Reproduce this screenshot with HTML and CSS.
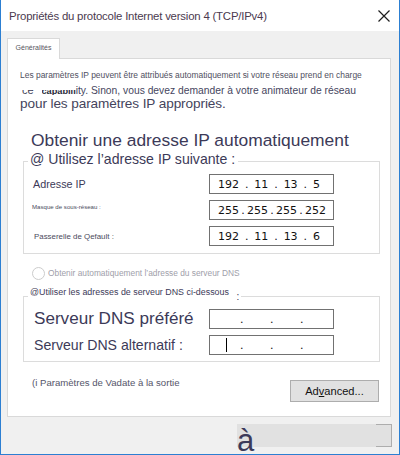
FILE: index.html
```html
<!DOCTYPE html>
<html lang="fr">
<head>
<meta charset="utf-8">
<title>Propriétés du protocole Internet version 4 (TCP/IPv4)</title>
<link rel="stylesheet" href="styles.css">
</head>
<body>
<div class="window">
  <div class="titlebar">
    <span class="title">Propriétés du protocole Internet version 4 (TCP/IPv4)</span>
    <svg class="close" width="12" height="12" viewBox="0 0 12 12"><path d="M0.5 0.5 L11.5 11.5 M11.5 0.5 L0.5 11.5" stroke="#1e1e1e" stroke-width="1.2" fill="none"/></svg>
  </div>
  <div class="body">
    <div class="tabs"><div class="tab">Généralités</div></div>
    <div class="panel">
      <p class="intro1">Les paramètres IP peuvent être attribués automatiquement si votre réseau prend en charge</p>
      <p class="intro2"><span class="clip clip-ce"><span class="clip-in">ce</span></span> <span class="clip clip-cap"><span class="clip-in">capabili</span></span>ity. Sinon, vous devez demander à votre animateur de réseau</p>
      <p class="intro3">pour les paramètres IP appropriés.</p>
      <p class="auto">Obtenir une adresse IP automatiquement</p>
      <fieldset class="group group-ip">
        <legend class="legend-ip">@ Utilisez l’adresse IP suivante :</legend>
        <div class="row">
          <span class="label l-ip">Adresse IP</span>
          <div class="ip"><span>192</span><span>.</span><span>11</span><span>.</span><span>13</span><span>.</span><span>5</span></div>
        </div>
        <div class="row">
          <span class="label l-mask">Masque de sous-réseau :</span>
          <div class="ip ip-wide"><span>255</span><span>.</span><span>255</span><span>.</span><span>255</span><span>.</span><span>252</span></div>
        </div>
        <div class="row">
          <span class="label l-gw">Passerelle de Qefault :</span>
          <div class="ip"><span>192</span><span>.</span><span>11</span><span>.</span><span>13</span><span>.</span><span>6</span></div>
        </div>
      </fieldset>
      <div class="radio-row"><span class="radio"></span><span class="radio-label">Obtenir automatiquement l’adresse du serveur DNS</span></div>
      <fieldset class="group group-dns">
        <legend class="legend-dns">@Utiliser les adresses de serveur DNS ci-dessous <span class="colon">:</span></legend>
        <div class="row row-dns">
          <span class="label l-dns1">Serveur DNS préféré</span>
          <div class="ip ip-empty"><span class="oct"></span><span class="dot">.</span><span class="oct"></span><span class="dot">.</span><span class="oct"></span><span class="dot">.</span><span class="oct"></span></div>
        </div>
        <div class="row row-dns">
          <span class="label l-dns2">Serveur DNS alternatif :</span>
          <div class="ip ip-empty"><span class="oct"><span class="caret"></span></span><span class="dot">.</span><span class="oct"></span><span class="dot">.</span><span class="oct"></span><span class="dot">.</span><span class="oct"></span></div>
        </div>
      </fieldset>
      <div class="footer">
        <span class="validate">(i Paramètres de Vadate à la sortie</span>
        <button class="adv" type="button">Ad<u>v</u>anced...</button>
      </div>
    </div>
  </div>
  <div class="bottom">
    <div class="ok-mask">à</div>
    <div class="ok-edge"></div>
  </div>
</div>
</body>
</html>
```
FILE: styles.css
```css
* { box-sizing: border-box; }
html, body { margin: 0; padding: 0; }
body {
  width: 400px;
  height: 455px;
  overflow: hidden;
  font-family: "Liberation Sans", Arial, sans-serif;
  background: #f0f0f0;
}
p { margin: 0; }

.window {
  width: 400px;
  height: 455px;
  border: 1px solid #2c7fd2;
  border-top: none;
  background: #f0f0f0;
  display: flex;
  flex-direction: column;
}

.titlebar {
  height: 31px;
  background: #ffffff;
  display: flex;
  align-items: center;
  justify-content: space-between;
  padding: 0 9px 0 8px;
  flex: none;
}
.title {
  font-size: 11.4px;
  letter-spacing: -0.2px;
  color: #4b3a4f;
  margin-top: 1px;
}
.close { display: block; }

.body {
  padding: 7px 8px 0 6px;
  flex: none;
}
.tabs { height: 20px; display: flex; }
.tab {
  width: 53px;
  height: 21px;
  background: #ffffff;
  border: 1px solid #d9d9d9;
  border-bottom: none;
  font-size: 7px;
  color: #555560;
  text-align: center;
  line-height: 18px;
  position: relative;
  z-index: 1;
}
.panel {
  height: 359px;
  background: #ffffff;
  border: 1px solid #d9d9d9;
  display: flex;
  flex-direction: column;
}

.intro1 {
  margin-top: 10px;
  padding-left: 12px;
  font-size: 8.45px;
  line-height: 12px;
  color: #505062;
  white-space: nowrap;
}
.intro2 {
  margin-top: 4px;
  padding-left: 14px;
  font-size: 10.3px;
  line-height: 12px;
  color: #464660;
  white-space: nowrap;
}
.clip {
  display: inline-block;
  overflow: hidden;
}
.clip-in { display: block; }
.clip-ce { height: 4px; vertical-align: 0; }
.clip-ce .clip-in { font-size: 11px; line-height: 11px; margin-top: -5.5px; color: #3d3d55; }
.clip-cap { height: 5.5px; vertical-align: -1px; margin-left: 5px; }
.clip-cap .clip-in { font-size: 9.2px; line-height: 9.2px; margin-top: -3px; font-weight: bold; color: #2a2a3a; }

.intro3 {
  padding-left: 12px;
  font-size: 13.6px;
  letter-spacing: -0.1px;
  line-height: 14px;
  color: #44445c;
  white-space: nowrap;
}
.auto {
  margin-top: 18px;
  padding-left: 23px;
  font-size: 17.4px;
  line-height: 22px;
  color: #3c3a58;
  white-space: nowrap;
}

.group {
  margin: 0 10px 0 15px;
  padding: 0;
  border: 1px solid #dcdcdc;
  min-width: 0;
}
.group-ip { margin-top: -1px; padding: 2px 0 7px 0; }
.legend-ip {
  margin-left: 4px;
  padding: 0 3px 4px 2px;
  font-size: 14.1px;
  line-height: 18px;
  color: #3c3a58;
  white-space: nowrap;
}
.row {
  display: grid;
  grid-template-columns: 176px 125px;
  align-items: center;
  height: 20px;
  padding-left: 9px;
}
.row + .row { margin-top: 6px; }
.label { color: #3c3a58; white-space: nowrap; }
.l-ip { font-size: 10.8px; }
.l-mask { font-size: 6.1px; color: #4a4a5c; align-self: start; margin-top: 3px; margin-left: -1px; }
.l-gw { font-size: 7.9px; color: #4a4a5c; margin-left: 1px; }

.ip {
  width: 125px;
  height: 20px;
  border: 1px solid #717171;
  background: #ffffff;
  display: flex;
  justify-content: space-between;
  align-items: center;
  padding: 0 13px 0 8px;
  font-family: "DejaVu Sans", Verdana, sans-serif;
  font-size: 11px;
  color: #111111;
}
.ip-wide { padding: 0 7px 0 8px; }
.ip-empty { justify-content: flex-start; padding: 0 0 0 3px; }
.oct { width: 27px; height: 14px; display: flex; justify-content: center; }
.dot { width: 3px; text-align: center; }
.caret { width: 1px; height: 14px; background: #000000; }

.radio-row {
  margin: 12px 0 0 24px;
  display: flex;
  align-items: center;
  height: 14px;
}
.radio {
  width: 13px;
  height: 13px;
  border: 1px solid #cccccc;
  border-radius: 50%;
  background: #ffffff;
  flex: none;
}
.radio-label {
  margin-left: 3px;
  font-size: 8.35px;
  color: #a0a0aa;
  white-space: nowrap;
}

.group-dns { margin-top: 6px; padding: 3px 0 6px 0; }
.legend-dns {
  margin-left: 4px;
  padding: 0 2px 8px 2px;
  font-size: 8.9px;
  line-height: 12px;
  color: #3c3a58;
  white-space: nowrap;
}
.colon { vertical-align: -5px; line-height: 0; margin-left: 5px; font-size: 10px; }
.row-dns { grid-template-columns: 175px 125px; padding-left: 10px; }
.l-dns1 { font-size: 17.1px; }
.l-dns2 { font-size: 14.1px; }

.footer {
  margin: 18px 11px 0 24px;
  display: flex;
  justify-content: space-between;
  align-items: flex-start;
}
.validate {
  margin-top: -3px;
  font-size: 9.6px;
  color: #55556a;
  white-space: nowrap;
}
.adv {
  width: 89px;
  height: 22px;
  margin: 0;
  padding: 0;
  border: 1px solid #adadad;
  background: #e1e1e1;
  font-family: "Liberation Sans", Arial, sans-serif;
  font-size: 11.1px;
  color: #111111;
}

.bottom {
  margin-top: 7px;
  padding-right: 7px;
  display: flex;
  justify-content: flex-end;
  height: 23px;
  flex: none;
}
.ok-mask {
  width: 139px;
  height: 23px;
  background: #e1e1e1;
  font-size: 31px;
  line-height: 33px;
  color: #3c3a5a;
  white-space: nowrap;
}
.ok-edge {
  width: 16px;
  height: 23px;
  border: 1px solid #adadad;
  border-left: none;
  background: #e1e1e1;
}
```
